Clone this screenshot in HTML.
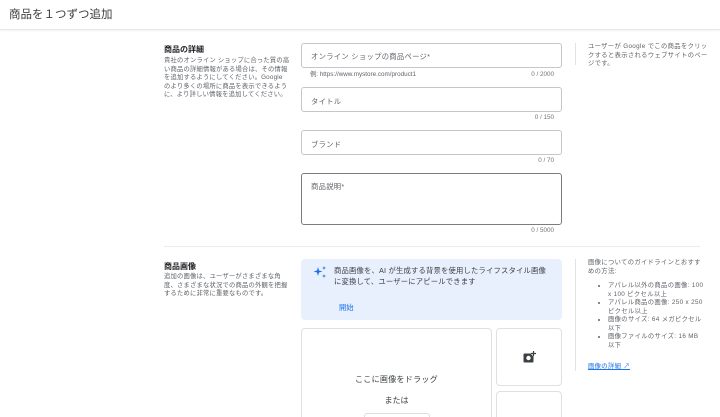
<!DOCTYPE html>
<html><head><meta charset="utf-8"><style>
*{margin:0;padding:0;box-sizing:border-box}
html,body{width:720px;height:417px;overflow:hidden}
body{background:#fff;font-family:"Liberation Sans","Noto Sans CJK JP",sans-serif;color:#3c4043;position:relative}
.a{position:absolute}
.hdr{left:0;top:0;width:720px;height:30px;border-bottom:1px solid #e6e6e6;box-shadow:0 1px 2px rgba(0,0,0,.05)}
.ttl{left:9px;top:6px;font-size:11.5px;color:#3c4043}
.h{font-size:8px;font-weight:bold;color:#202124}
.d{font-size:6.3px;letter-spacing:0.35px;line-height:8.5px;color:#5f6368}
.l{letter-spacing:0.2px}
.f{border:1px solid #c4c6c9;border-radius:3px;left:301px;width:261px;background:#fff}
.ph{font-size:7.3px;letter-spacing:0.3px;color:#5f6368;left:9px}
.c{font-size:6.3px;color:#70757a;text-align:right;width:60px}
.side{left:575px;border-left:1px solid #e3e3e3}
ul.d li{margin-left:8px}
</style></head><body>
<div class="a hdr"></div>
<div class="a ttl">商品を１つずつ追加</div>

<div class="a h" style="left:164px;top:44px">商品の詳細</div>
<div class="a d l" style="left:164px;top:57px;width:127px">貴社のオンライン ショップに合った質の高い商品の詳細情報がある場合は、その情報を追加するようにしてください。Google のより多くの場所に商品を表示できるように、より詳しい情報を追加してください。</div>

<div class="a f" style="top:43px;height:25px"><div class="a ph" style="top:8px">オンライン ショップの商品ページ*</div></div>
<div class="a d" style="left:310px;top:71px;letter-spacing:0">例: https://www.mystore.com/product1</div>
<div class="a c" style="left:494px;top:71px">0 / 2000</div>
<div class="a f" style="top:87px;height:25px"><div class="a ph" style="top:9px">タイトル</div></div>
<div class="a c" style="left:494px;top:114px">0 / 150</div>
<div class="a f" style="top:130px;height:25px"><div class="a ph" style="top:9px">ブランド</div></div>
<div class="a c" style="left:494px;top:157px">0 / 70</div>
<div class="a f" style="top:173px;height:52px;border-color:#7a7d80"><div class="a ph" style="top:8px">商品説明*</div></div>
<div class="a c" style="left:494px;top:227px">0 / 5000</div>

<div class="a side" style="top:43px;height:22px"></div>
<div class="a d" style="left:588px;top:43px;width:122px">ユーザーが Google でこの商品をクリックすると表示されるウェブサイトのページです。</div>

<div class="a" style="left:164px;top:246px;width:536px;height:1px;background:#ececec"></div>

<div class="a h" style="left:164px;top:261px">商品画像</div>
<div class="a d l" style="left:164px;top:273px;width:127px">追加の画像は、ユーザーがさまざまな角度、さまざまな状況での商品の外観を把握するために非常に重要なものです。</div>

<div class="a" style="left:301px;top:259px;width:261px;height:61px;background:#e8f0fe;border-radius:4px">
<svg class="a" style="left:12px;top:6px" width="14" height="14" viewBox="0 0 14 14" fill="#1a73e8"><path d="M5 2 L6 5.5 L9.5 6.5 L6 7.5 L5 11 L4 7.5 L0.5 6.5 L4 5.5Z"/><path d="M11 1 L11.5 2.5 L13 3 L11.5 3.5 L11 5 L10.5 3.5 L9 3 L10.5 2.5Z"/><path d="M11 9 L11.5 10.5 L13 11 L11.5 11.5 L11 13 L10.5 11.5 L9 11 L10.5 10.5Z"/></svg>
<div class="a" style="left:33px;top:6px;width:218px;font-size:7.3px;letter-spacing:0.2px;line-height:11px;color:#3c4043">商品画像を、AI が生成する背景を使用したライフスタイル画像に変換して、ユーザーにアピールできます</div>
<div class="a" style="left:38px;top:44px;font-size:7.3px;color:#1a73e8">開始</div>
</div>

<div class="a" style="left:301px;top:328px;width:191px;height:100px;border:1px solid #e0e0e0;border-radius:4px"></div>
<div class="a" style="left:301px;top:374px;width:191px;text-align:center;font-size:8px;letter-spacing:0.3px;color:#3c4043">ここに画像をドラッグ</div>
<div class="a" style="left:301px;top:395px;width:191px;text-align:center;font-size:8px;color:#3c4043">または</div>
<div class="a" style="left:364px;top:413px;width:66px;height:10px;border:1px solid #ddd;border-radius:3px"></div>
<div class="a" style="left:496px;top:328px;width:66px;height:58px;border:1px solid #e0e0e0;border-radius:4px"></div>
<svg class="a" style="left:523px;top:351px" width="13" height="12" viewBox="0 0 13 12"><rect x="0.5" y="2.5" width="10" height="9" rx="1" fill="#3c4043"/><circle cx="5.5" cy="7" r="2.2" fill="#fff"/><path d="M10.5 0 v5 M8 2.5 h5" stroke="#fff" stroke-width="2.4"/><path d="M10.5 0 v5 M8 2.5 h5" stroke="#3c4043" stroke-width="1.2"/></svg>
<div class="a" style="left:496px;top:391px;width:66px;height:40px;border:1px solid #e0e0e0;border-radius:4px"></div>

<div class="a side" style="top:259px;height:112px"></div>
<div class="a d" style="left:588px;top:259px;width:118px">画像についてのガイドラインとおすすめの方法:</div>
<ul class="a d" style="left:600px;top:282px;width:104px;list-style:disc outside">
<li>アパレル以外の商品の画像: 100 x 100 ピクセル以上</li>
<li>アパレル商品の画像: 250 x 250 ピクセル以上</li>
<li>画像のサイズ: 64 メガピクセル以下</li>
<li>画像ファイルのサイズ: 16 MB 以下</li>
</ul>
<div class="a d" style="left:588px;top:363px;color:#1a73e8;text-decoration:underline">画像の詳細 ↗</div>
</body></html>
